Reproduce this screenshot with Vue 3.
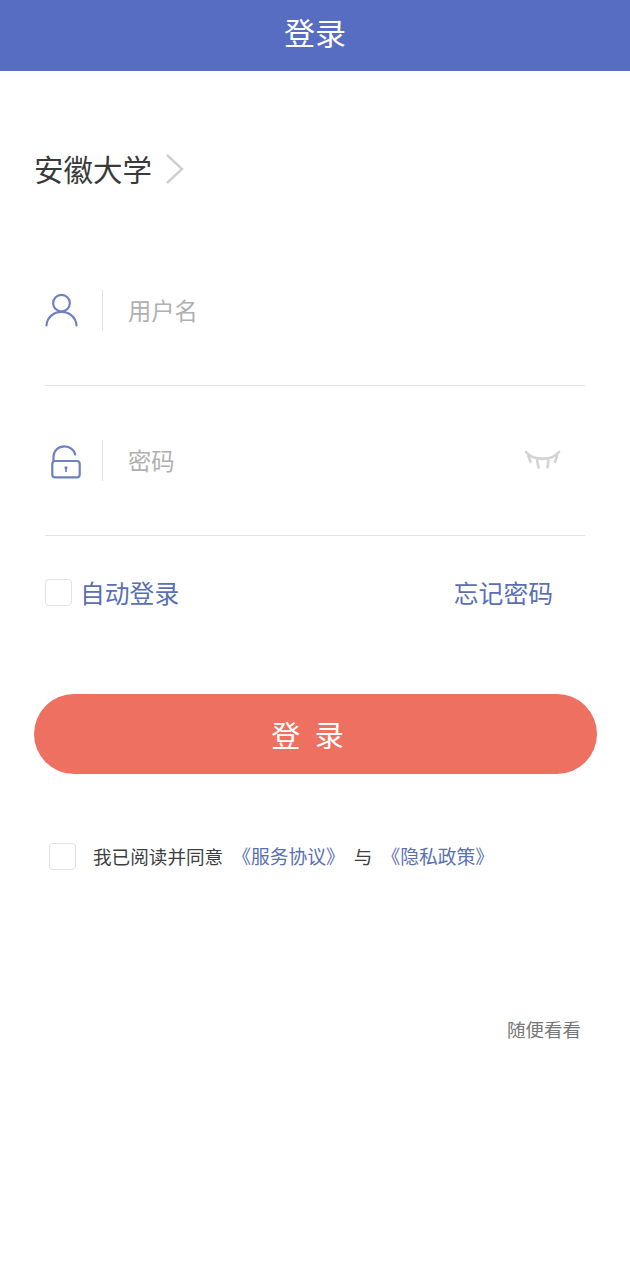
<template>
  <div class="login-page">
    <header class="top-bar">登录</header>

    <div class="school">
      <span>安徽大学</span>
      <svg class="chevron" width="20" height="32" viewBox="0 0 20 32">
        <path d="M2 2 L17 16 L2 30" fill="none" stroke="#cfcfcf" stroke-width="2.4" />
      </svg>
    </div>

    <div class="form">
      <div class="field">
        <div class="field-icon">
          <svg width="34" height="34" viewBox="0 0 34 34">
            <circle cx="17" cy="10" r="8.6" fill="none" stroke="#6f7fc4" stroke-width="2.2" />
            <path d="M1.5 33 C2 24.5 9 19 17 19 C25 19 32 24.5 32.5 33" fill="none" stroke="#6f7fc4" stroke-width="2.2" stroke-linecap="round" />
          </svg>
        </div>
        <span class="field-text">用户名</span>
      </div>

      <div class="field">
        <div class="field-icon">
          <svg class="lock" width="30" height="34" viewBox="0 0 30 34">
            <rect x="1.3" y="16" width="27.4" height="16.4" rx="3" fill="none" stroke="#6f7fc4" stroke-width="2.2" />
            <path d="M2.5 15.5 V12 C2.5 5.5 7.5 1.4 13.5 1.4 C19 1.4 23.4 5 24.2 9.5" fill="none" stroke="#6f7fc4" stroke-width="2.2" stroke-linecap="round" />
            <circle cx="15" cy="22.8" r="1.6" fill="#6f7fc4" />
            <rect x="14.2" y="23" width="1.6" height="4" fill="#6f7fc4" />
          </svg>
        </div>
        <span class="field-text">密码</span>
        <svg class="eye" width="38" height="20" viewBox="0 0 38 20">
          <path d="M2 2 C9 11 28 11 35 2" fill="none" stroke="#d4d4d4" stroke-width="2.8" stroke-linecap="round" />
          <path d="M4.5 6 L6.5 12 M13 10 L14.5 17.5 M24.5 10 L23.5 17.5 M33 6 L31 12" fill="none" stroke="#d4d4d4" stroke-width="2.6" stroke-linecap="round" />
        </svg>
      </div>

      <div class="options">
        <label class="auto-login">
          <span class="check"></span>
          <span class="option-text">自动登录</span>
        </label>
        <span class="option-text">忘记密码</span>
      </div>
    </div>

    <button class="login-btn">登 录</button>

    <div class="agreement">
      <span class="check"></span>
      <span class="agree-text lead">我已阅读并同意</span>
      <span class="link first">《服务协议》</span>
      <span class="agree-text and">与</span>
      <span class="link">《隐私政策》</span>
    </div>

    <div class="browse">随便看看</div>
  </div>
</template>

<script setup>
</script>

<style>
html, body {
  margin: 0;
  background: #fff;
}
</style>

<style scoped>
.login-page {
  width: 630px;
  height: 1280px;
  overflow: hidden;
  font-family: "Noto Sans CJK SC", "Liberation Sans", sans-serif;
  color: #333;
}

.top-bar {
  height: 71px;
  line-height: 64px;
  background: #566dc2;
  color: #fff;
  font-size: 31px;
  text-align: center;
}

.school {
  display: flex;
  align-items: center;
  gap: 13px;
  height: 44px;
  margin: 75px 0 0 34px;
  font-size: 29.5px;
  color: #3a3a3a;
}

.chevron {
  margin-top: 2px;
}

.form {
  margin: 46px 45px 0;
}

.field {
  display: flex;
  align-items: center;
  height: 150px;
  box-sizing: border-box;
  padding-bottom: 1px;
  border-bottom: 1px solid #e3e3e3;
}

.field-icon {
  display: flex;
  justify-content: center;
  align-items: center;
  width: 33px;
  height: 41px;
  padding-right: 24px;
  border-right: 1px solid #e3e3e3;
  margin-right: 25px;
}

.lock {
  flex-shrink: 0;
  margin-left: 9px;
  margin-top: 3px;
}

.field-text {
  flex: 1;
  font-size: 23.3px;
  color: #b0b0b0;
}

.eye {
  margin-right: 23px;
}

.options {
  display: flex;
  justify-content: space-between;
  align-items: center;
  box-sizing: border-box;
  height: 116px;
  padding: 0 32px 3px 0;
  font-size: 24.8px;
  color: #5a6fb4;
}

.option-text {
  margin-top: -2px;
}

.auto-login {
  display: flex;
  align-items: center;
  gap: 8px;
}

.check {
  display: block;
  flex-shrink: 0;
  box-sizing: border-box;
  width: 27px;
  height: 27px;
  border: 1px solid #e2e2e2;
  border-radius: 4px;
  background: #fff;
}

.login-btn {
  display: block;
  width: 563px;
  height: 80px;
  margin: 42px 0 0 34px;
  border: 0;
  border-radius: 40px;
  background: #ee7060;
  color: #fff;
  font-family: inherit;
  font-size: 29px;
  word-spacing: 8px;
  padding: 0 16px 0 0;
}

.agreement {
  display: flex;
  align-items: center;
  height: 27px;
  margin: 69px 0 0 49px;
  font-size: 18.6px;
}

.agree-text,
.link {
  margin-top: -2px;
}

.agree-text {
  color: #3f3f3f;
}

.agree-text.lead {
  margin-left: 17px;
}

.agree-text.and {
  margin-left: 9px;
  margin-right: 9px;
}

.link {
  font-size: 18.8px;
  color: #5a6fb4;
}

.link.first {
  margin-left: 9px;
}

.browse {
  margin: 146px 49px 0 0;
  text-align: right;
  font-size: 18.5px;
  color: #777;
}
</style>
